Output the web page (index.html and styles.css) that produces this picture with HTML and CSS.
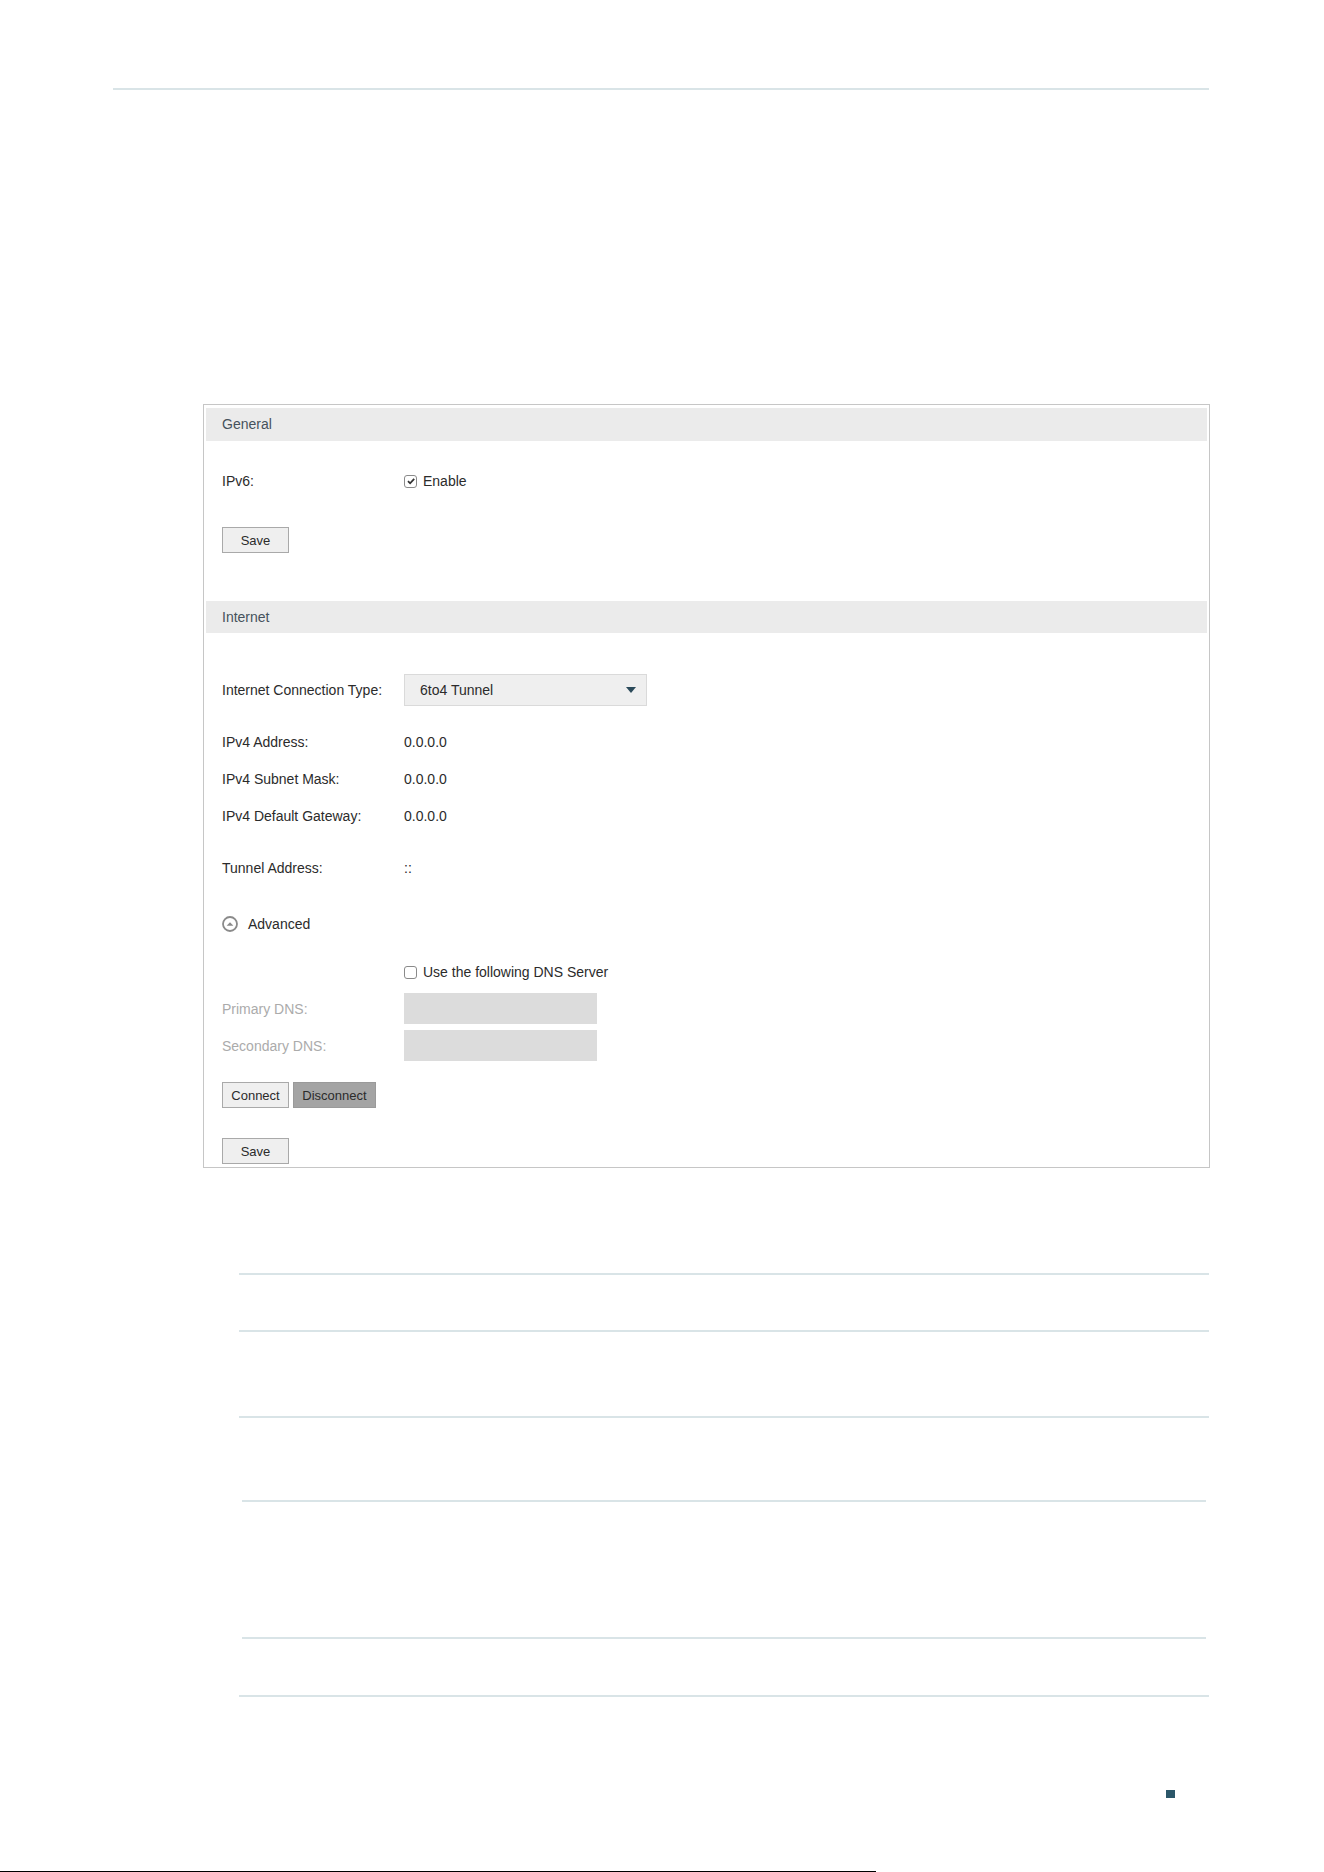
FILE: index.html
```html
<!DOCTYPE html>
<html lang="en">
<head>
    <meta charset="UTF-8">
    <title>IPv6 Internet - 6to4 Tunnel</title>
    <link rel="stylesheet" href="styles.css">
</head>
<body>
    <div class="page">
        <div class="top-rule"></div>

        <!-- Screenshot of the router page -->
        <div class="panel">
            <div class="panel-head">General</div>
            <div class="panel-body">
                <div class="row ipv6-row">
                    <span class="label">IPv6:</span>
                    <span class="value">
                        <span class="cb">
                            <svg width="10" height="10" viewBox="0 0 10 10"><path d="M2 5.2 L4.1 7.3 L8.2 2.8" fill="none" stroke="#333" stroke-width="1.8"/></svg>
                        </span>
                        Enable
                    </span>
                </div>
                <div class="actions first-save">
                    <button class="btn">Save</button>
                </div>
            </div>

            <div class="panel-head internet-head">Internet</div>
            <div class="panel-body">
                <div class="row select-row">
                    <span class="label">Internet Connection Type:</span>
                    <div class="select">
                        <span>6to4 Tunnel</span>
                        <svg class="caret" width="10" height="6" viewBox="0 0 10 6"><polygon points="0,0 10,0 5,6" fill="#2b4a5a"/></svg>
                    </div>
                </div>
                <div class="row info-first">
                    <span class="label">IPv4 Address:</span>
                    <span class="value">0.0.0.0</span>
                </div>
                <div class="row info-next">
                    <span class="label">IPv4 Subnet Mask:</span>
                    <span class="value">0.0.0.0</span>
                </div>
                <div class="row info-next">
                    <span class="label">IPv4 Default Gateway:</span>
                    <span class="value">0.0.0.0</span>
                </div>
                <div class="row tunnel-row">
                    <span class="label">Tunnel Address:</span>
                    <span class="value">::</span>
                </div>
                <div class="row advanced-row">
                    <svg class="adv-icon" width="16" height="16" viewBox="0 0 16 16">
                        <circle cx="8" cy="8" r="7" fill="none" stroke="#8a8a8a" stroke-width="1.8"/>
                        <polygon points="4.6,9.8 8,6.2 11.4,9.8" fill="#8a8a8a"/>
                    </svg>
                    <span>Advanced</span>
                </div>
                <div class="row dns-row">
                    <span class="label"></span>
                    <span class="value"><span class="cb"></span>Use the following DNS Server</span>
                </div>
                <div class="row input-row primary-row">
                    <span class="label disabled">Primary DNS:</span>
                    <div class="text-input"></div>
                </div>
                <div class="row input-row secondary-row">
                    <span class="label disabled">Secondary DNS:</span>
                    <div class="text-input"></div>
                </div>
                <div class="actions connect-row">
                    <button class="btn">Connect</button>
                    <button class="btn btn-dark">Disconnect</button>
                </div>
                <div class="actions last-save">
                    <button class="btn">Save</button>
                </div>
            </div>
        </div>

        <!-- Empty table rules below the screenshot -->
        <div class="rules">
            <div class="rule r1"></div>
            <div class="rule r2"></div>
            <div class="rule r3"></div>
            <div class="rule r4 narrow"></div>
            <div class="rule r5 narrow"></div>
            <div class="rule r6"></div>
        </div>

        <div class="page-mark"></div>
        <div class="bottom-line"></div>
    </div>
</body>
</html>
```

FILE: styles.css
```css
/* General Styles */
body {
    margin: 0;
    background-color: #ffffff;
    font-family: "Liberation Sans", Arial, sans-serif;
    font-size: 14px;
    color: #2b2b2b;
}

.page {
    width: 1324px;
    height: 1872px;
    padding-top: 88px;
    box-sizing: border-box;
    overflow: hidden;
}

.top-rule {
    margin-left: 113px;
    width: 1096px;
    height: 2px;
    background-color: #d9e4e7;
}

/* Panel (router web page screenshot) */
.panel {
    margin-top: 314px;
    margin-left: 203px;
    width: 1007px;
    box-sizing: border-box;
    border: 1px solid #c6c6c6;
    padding: 3px 2px;
}

.panel-head {
    height: 33px;
    line-height: 33px;
    padding-left: 16px;
    background-color: #ebebeb;
    color: #46525c;
    font-size: 14px;
}

.internet-head {
    height: 32px;
    line-height: 32px;
    margin-top: 48px;
}

.panel-body {
    padding-left: 16px;
}

.row {
    display: flex;
    align-items: center;
    height: 20px;
}

.label {
    width: 182px;
    flex-shrink: 0;
}

.label.disabled {
    color: #ababab;
}

.value {
    display: flex;
    align-items: center;
}

.cb {
    display: inline-flex;
    align-items: center;
    justify-content: center;
    width: 13px;
    height: 13px;
    box-sizing: border-box;
    border: 1px solid #8a8a8a;
    border-radius: 3px;
    margin-right: 6px;
    background-color: #fff;
}

.ipv6-row { margin-top: 30px; }
.first-save { margin-top: 36px; }

.select-row {
    height: 32px;
    margin-top: 41px;
}

.select {
    display: flex;
    align-items: center;
    justify-content: space-between;
    width: 243px;
    height: 32px;
    box-sizing: border-box;
    padding: 0 10px 0 15px;
    background-color: #efefef;
    border: 1px solid #dadada;
}

.info-first { margin-top: 26px; }
.info-next { margin-top: 17px; }
.tunnel-row { margin-top: 32px; }
.advanced-row { margin-top: 36px; }

.adv-icon {
    margin-right: 10px;
}

.dns-row { margin-top: 28px; }

.input-row {
    height: 31px;
}

.primary-row { margin-top: 11px; }
.secondary-row { margin-top: 6px; }

.text-input {
    width: 193px;
    height: 31px;
    background-color: #dcdcdc;
}

/* Buttons */
.actions {
    display: flex;
    gap: 4px;
}

.btn {
    height: 26px;
    min-width: 67px;
    padding: 0 7px;
    box-sizing: border-box;
    border: 1px solid #a9a9a9;
    background-color: #efefef;
    color: #2b2b2b;
    font-family: "Liberation Sans", Arial, sans-serif;
    font-size: 13px;
    cursor: pointer;
}

.btn-dark {
    min-width: 83px;
    background-color: #a4a4a4;
    border-color: #9a9a9a;
}

.connect-row { margin-top: 21px; }
.last-save { margin-top: 30px; }

/* Rules below */
.rules {
    margin-top: 105px;
}

.rule {
    margin-left: 239px;
    width: 970px;
    height: 2px;
    background-color: #d9e4e7;
}

.rule.narrow {
    margin-left: 242px;
    width: 964px;
}

.r2 { margin-top: 55px; }
.r3 { margin-top: 84px; }
.r4 { margin-top: 82px; }
.r5 { margin-top: 135px; }
.r6 { margin-top: 56px; }

.page-mark {
    margin-top: 93px;
    margin-left: 1166px;
    width: 9px;
    height: 8px;
    background-color: #2b5769;
}

.bottom-line {
    margin-top: 73px;
    width: 876px;
    height: 1px;
    background-color: #000000;
}
```
